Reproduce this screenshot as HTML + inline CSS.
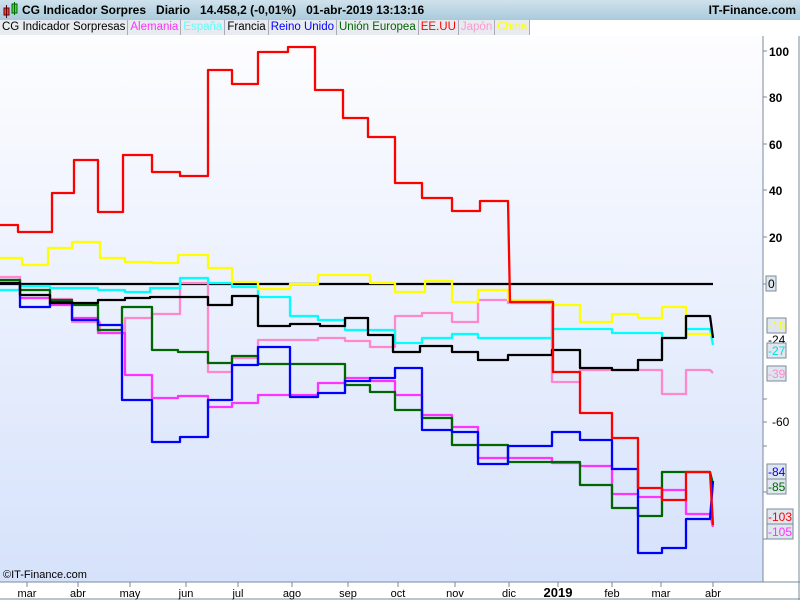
<!DOCTYPE html>
<html><head><meta charset="utf-8"><style>
body{margin:0;width:800px;height:600px;overflow:hidden;background:#fff;font-family:"Liberation Sans",sans-serif}
#tb{position:absolute;left:0;top:0;width:800px;height:20px;background:linear-gradient(#cfe2ec,#a9cadb);font-weight:bold;font-size:12px;line-height:21px}
#tb .t{position:absolute;left:22px}
#tb .r{position:absolute;right:4px}
#leg{position:absolute;left:0;top:20px;height:15px;font-size:11.5px;line-height:15px;white-space:nowrap;display:flex}
#leg span{background:#e8ecf0;border-right:1px solid #aab;padding:0 2px}
</style></head><body>
<div id="tb"><svg style="position:absolute;left:3px;top:2px" width="16" height="16"><rect x="1" y="6" width="5" height="7" fill="#e44" stroke="#600"/><line x1="3.5" y1="3" x2="3.5" y2="16" stroke="#600"/><rect x="9" y="2" width="5" height="9" fill="#4d4" stroke="#060"/><line x1="11.5" y1="0" x2="11.5" y2="13" stroke="#060"/></svg><span class="t">CG Indicador Sorpres &nbsp;&nbsp;Diario &nbsp;&nbsp;14.458,2 (-0,01%) &nbsp;&nbsp;01-abr-2019 13:13:16</span><span class="r">IT-Finance.com</span></div>
<svg width="800" height="600" style="position:absolute;left:0;top:0">
<defs><linearGradient id="g" x1="0" y1="0" x2="0" y2="1"><stop offset="0" stop-color="#fdfdff"/><stop offset="1" stop-color="#d6e2fb"/></linearGradient></defs>
<rect x="0" y="36" width="763" height="546" fill="url(#g)"/>
<line x1="763" y1="36" x2="763" y2="582" stroke="#7a8a9a"/>
<line x1="0" y1="582" x2="800" y2="582" stroke="#7a8a9a"/>
<line x1="0" y1="599" x2="800" y2="599" stroke="#7a8a9a"/>
<line x1="799" y1="36" x2="799" y2="600" stroke="#7a8a9a"/>
<g stroke="#7a8a9a"><line x1="27" y1="582" x2="27" y2="587"/><line x1="78" y1="582" x2="78" y2="587"/><line x1="130" y1="582" x2="130" y2="587"/><line x1="186" y1="582" x2="186" y2="587"/><line x1="238" y1="582" x2="238" y2="587"/><line x1="292" y1="582" x2="292" y2="587"/><line x1="348" y1="582" x2="348" y2="587"/><line x1="398" y1="582" x2="398" y2="587"/><line x1="455" y1="582" x2="455" y2="587"/><line x1="509" y1="582" x2="509" y2="587"/><line x1="558" y1="582" x2="558" y2="587"/><line x1="612" y1="582" x2="612" y2="587"/><line x1="661" y1="582" x2="661" y2="587"/><line x1="713" y1="582" x2="713" y2="587"/></g>
<g fill="none" stroke-width="2.3" stroke-linejoin="round">
<line x1="0" y1="284" x2="713" y2="284" stroke="#000"/>
<polyline stroke="#ff88cc" points="0,277 20,277 20,290 50,290 50,299 72,299 72,322 100,322 100,333 125,333 125,318 152,318 152,314 180,314 180,283 208,283 208,372 232,372 232,358 258,358 258,340 318,340 318,338 345,338 345,341 370,341 370,347 395,347 395,316 422,316 422,313 452,313 452,322 478,322 478,300 508,300 508,303 552,303 552,382 580,382 580,370 662,370 662,394 686,394 686,370 710,370 713,373"/>
<polyline stroke="#00ffff" points="0,290 20,290 20,286 50,286 50,288 98,288 98,290 125,290 125,292 150,292 150,288 180,288 180,278 208,278 208,283 232,283 232,287 258,287 258,297 290,297 290,316 318,316 318,320 345,320 345,330 395,330 395,343 422,343 422,338 452,338 452,334 478,334 478,338 552,338 552,329 612,329 612,333 662,333 662,338 686,338 686,329 710,329 713,345"/>
<polyline stroke="#ffff00" points="0,258 22,258 22,265 48,265 48,248 72,248 72,242 100,242 100,258 125,258 125,262 152,262 152,263 178,263 178,255 208,255 208,268 232,268 232,282 258,282 258,289 290,289 290,284 318,284 318,275 370,275 370,283 395,283 395,292 425,292 425,281 452,281 452,302 478,302 478,290 508,290 508,300 552,300 552,305 580,305 580,322 612,322 612,314 638,314 638,318 662,318 662,307 686,307 686,334 710,334 713,337"/>
<polyline stroke="#ff33ff" points="0,280 20,280 20,298 50,298 50,305 72,305 72,318 98,318 98,333 125,333 125,375 152,375 152,398 178,398 178,396 208,396 208,407 232,407 232,403 258,403 258,395 318,395 318,383 345,383 345,378 370,378 370,381 395,381 395,395 422,395 422,415 452,415 452,427 478,427 478,458 552,458 552,463 580,463 580,466 612,466 612,494 638,494 638,497 662,497 662,490 686,490 686,514 710,514 713,527"/>
<polyline stroke="#006600" points="0,280 20,280 20,290 50,290 50,300 72,300 72,305 98,305 98,330 122,330 122,307 152,307 152,350 178,350 178,352 208,352 208,363 232,363 232,356 258,356 258,364 345,364 345,385 370,385 370,392 395,392 395,410 422,410 422,418 452,418 452,445 508,445 508,462 580,462 580,485 612,485 612,508 638,508 638,516 662,516 662,472 710,472 713,484"/>
<polyline stroke="#0000ff" points="0,283 20,283 20,307 50,307 50,302 72,302 72,320 98,320 98,325 122,325 122,400 152,400 152,442 180,442 180,437 208,437 208,400 232,400 232,365 258,365 258,347 290,347 290,397 318,397 318,393 345,393 345,381 370,381 370,378 395,378 395,368 422,368 422,430 452,430 452,432 478,432 478,464 508,464 508,446 552,446 552,432 580,432 580,440 612,440 612,469 638,469 638,553 662,553 662,548 686,548 686,519 710,519 713,481"/>
<polyline stroke="#000" points="0,283 20,283 20,295 50,295 50,303 98,303 98,300 125,300 125,298 150,298 150,297 208,297 208,305 232,305 232,296 258,296 258,326 290,326 290,324 320,324 320,326 345,326 345,318 368,318 368,335 393,335 393,352 420,352 420,346 452,346 452,352 478,352 478,360 508,360 508,355 552,355 552,350 580,350 580,368 612,368 612,370 638,370 638,360 662,360 662,338 686,338 686,316 710,316 713,338"/>
<polyline stroke="#ff0000" points="0,225 18,225 18,232 52,232 52,193 74,193 74,160 98,160 98,212 123,212 123,155 152,155 152,172 180,172 180,176 208,176 208,70 232,70 232,84 258,84 258,52 288,52 288,47 315,47 315,90 343,90 343,118 368,118 368,137 395,137 395,183 422,183 422,198 452,198 452,211 480,211 480,201 508,201 510,302 553,302 553,372 580,372 580,413 612,413 612,438 638,438 638,488 662,488 662,500 686,500 686,472 710,472 713,525"/>
</g>
<g font-size="12" font-weight="bold" fill="#000" stroke="none">
<g stroke="#7a8a9a"><line x1="763" y1="51" x2="767" y2="51"/><line x1="763" y1="97" x2="767" y2="97"/><line x1="763" y1="144" x2="767" y2="144"/><line x1="763" y1="190" x2="767" y2="190"/><line x1="763" y1="237" x2="767" y2="237"/><line x1="763" y1="284" x2="767" y2="284"/><line x1="763" y1="422" x2="767" y2="422"/><line x1="763" y1="399" x2="767" y2="399"/><line x1="763" y1="446" x2="767" y2="446"/><line x1="763" y1="492" x2="767" y2="492"/><line x1="763" y1="539" x2="767" y2="539"/></g>
<text x="769" y="56">100</text><text x="769" y="102">80</text><text x="769" y="149">60</text><text x="769" y="195">40</text><text x="769" y="242">20</text><text x="772" y="426" font-weight="normal">-60</text>
</g>
<g font-size="12">
<rect x="766" y="276" width="10" height="15" fill="#e0e6f0" stroke="#7a8a9a"/><text x="768" y="288">0</text>
<rect x="767" y="318" width="19" height="15" fill="#e0e6f0" stroke="#7a8a9a"/><text x="768" y="330" fill="#ff0">-18</text>
<text x="768" y="344">-24</text>
<rect x="767" y="343" width="19" height="15" fill="#e0e6f0" stroke="#7a8a9a"/><text x="768" y="355" fill="#0dd">-27</text>
<rect x="767" y="366" width="19" height="15" fill="#e0e6f0" stroke="#7a8a9a"/><text x="768" y="378" fill="#f8c">-39</text>
<rect x="767" y="464" width="19" height="15" fill="#e0e6f0" stroke="#7a8a9a"/><text x="768" y="476" fill="#00f">-84</text>
<rect x="767" y="479" width="19" height="15" fill="#e0e6f0" stroke="#7a8a9a"/><text x="768" y="491" fill="#060">-85</text>
<rect x="767" y="509" width="26" height="15" fill="#e0e6f0" stroke="#7a8a9a"/><text x="768" y="521" fill="#f00">-103</text>
<rect x="767" y="524" width="26" height="15" fill="#e0e6f0" stroke="#7a8a9a"/><text x="768" y="536" fill="#f3f">-105</text>
<text x="3" y="578" font-size="11">©IT-Finance.com</text>
</g>
<g font-size="11" text-anchor="middle" stroke="none">
<text x="27" y="597">mar</text><text x="78" y="597">abr</text><text x="130" y="597">may</text><text x="186" y="597">jun</text><text x="238" y="597">jul</text><text x="292" y="597">ago</text><text x="348" y="597">sep</text><text x="398" y="597">oct</text><text x="455" y="597">nov</text><text x="509" y="597">dic</text><text x="558" y="597" font-weight="bold" font-size="13">2019</text><text x="612" y="597">feb</text><text x="661" y="597">mar</text><text x="713" y="597">abr</text>
</g>
</svg>
<div id="leg"><span>CG Indicador Sorpresas</span><span style="color:#f3f">Alemania</span><span style="color:#5ff">España</span><span>Francia</span><span style="color:#00f">Reino Unido</span><span style="color:#060">Unión Europea</span><span style="color:#f00">EE.UU</span><span style="color:#f9c">Japón</span><span style="color:#ff0">China</span></div>
</body></html>
